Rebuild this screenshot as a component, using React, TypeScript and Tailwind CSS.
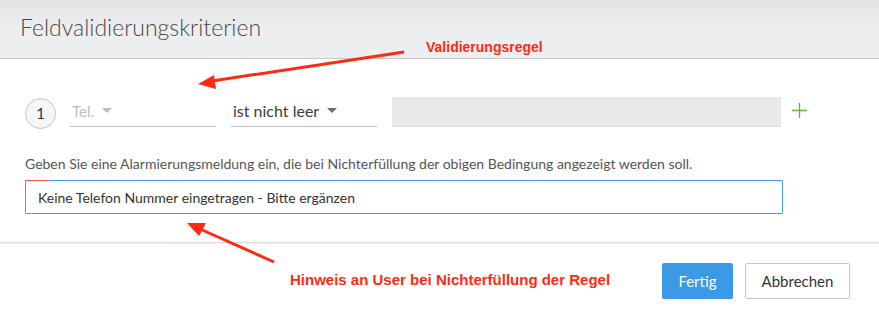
import React from "react";

const ui = { fontFamily: "Lato, 'Open Sans', sans-serif" };
const note = { fontFamily: "'Liberation Sans', Arial, sans-serif" };

function Caret({ light }: { light?: boolean }) {
  return (
    <svg width="10" height="6" viewBox="0 0 10 6" className="ml-2">
      <path d="M0 0h10L5 5z" fill={light ? "#bdbdbd" : "#6b6b6b"} />
    </svg>
  );
}

function Arrows() {
  return (
    <svg
      className="pointer-events-none absolute left-0 top-0"
      width="879"
      height="316"
      viewBox="0 0 879 316"
    >
      <line x1="404" y1="52" x2="212" y2="81" stroke="#ff2a12" strokeWidth="3" />
      <path d="M198 84 L214 75 L216 89 Z" fill="#ff2a12" />
      <line x1="274" y1="262" x2="200" y2="229" stroke="#ff2a12" strokeWidth="3" />
      <path d="M187 223 L206 223 L199 236 Z" fill="#ff2a12" />
    </svg>
  );
}

export default function App() {
  return (
    <div className="relative h-[316px] w-[879px] overflow-hidden bg-white" style={ui}>
      <div className="flex h-[59px] items-center border-b border-[#c9c9c9] bg-gradient-to-b from-[#e2e3e5] via-[#edeef0] to-[#edeef0] pl-5">
        <h1 className="pb-[4px] text-[23px] font-light text-[#4a4a4a]">
          Feldvalidierungskriterien
        </h1>
      </div>

      <div className="px-[25px] pt-[35px]">
        <div className="flex items-center">
          <div className="mt-[4px] flex h-[31px] w-[31px] items-center justify-center rounded-full border border-[#c4c4c4] bg-[#f6f6f6] text-[15px] text-[#333]">
            1
          </div>
          <div className="ml-[14px] flex h-[30px] w-[146px] items-center border-b border-[#c2c2c2] pl-[2px] text-[15px] text-[#bdbdbd]">
            Tel.
            <Caret light />
          </div>
          <div className="ml-[15px] flex h-[30px] w-[146px] items-center border-b border-[#c2c2c2] pl-[2px] text-[16px] text-[#3c3c3c]">
            ist nicht leer
            <Caret />
          </div>
          <div className="ml-[15px] h-[30px] w-[389px] border-b border-[#dddddd] bg-[#e9e9e9]" />
          <svg width="15" height="15" viewBox="0 0 15 15" className="ml-[11px] mb-[2px]">
            <path d="M7.5 0v15M0 7.5h15" stroke="#6aae36" strokeWidth="1.3" />
          </svg>
        </div>

        <p className="mt-[27px] text-[14px] leading-[16px] text-[#555]">
          Geben Sie eine Alarmierungsmeldung ein, die bei Nichterfüllung der obigen Bedingung angezeigt werden soll.
        </p>

        <div className="relative mt-[8px] flex h-[34px] w-[758px] items-center rounded-[1px] border border-[#4a9ded] pl-[12px] text-[14px] text-[#333] shadow-[inset_0_1px_2px_rgba(0,0,0,0.06)]">
          <span className="absolute left-[-1px] top-[-1px] h-[1px] w-[25px] bg-[#ef5a50]" />
          Keine Telefon Nummer eingetragen - Bitte ergänzen
        </div>
      </div>

      <div className="mt-[28px] h-[3px] border-t border-[#dcdcdc] bg-gradient-to-b from-[#ececec] to-white" />

      <div className="flex items-center justify-end pr-[29px] pt-[18px]">
        <button className="h-[36px] w-[71px] rounded-[2px] bg-[#3b99e6] text-[15px] text-white">
          Fertig
        </button>
        <button className="ml-[12px] h-[36px] w-[105px] rounded-[2px] border border-[#c8c8c8] bg-white text-[15px] text-[#333]">
          Abbrechen
        </button>
      </div>

      <span
        className="absolute left-[426px] top-[37px] text-[14px] font-bold text-[#ff2a12]"
        style={note}
      >
        Validierungsregel
      </span>
      <span
        className="absolute left-[290px] top-[269px] text-[15px] font-bold text-[#ff2a12]"
        style={note}
      >
        Hinweis an User bei Nichterfüllung der Regel
      </span>
      <Arrows />
    </div>
  );
}
